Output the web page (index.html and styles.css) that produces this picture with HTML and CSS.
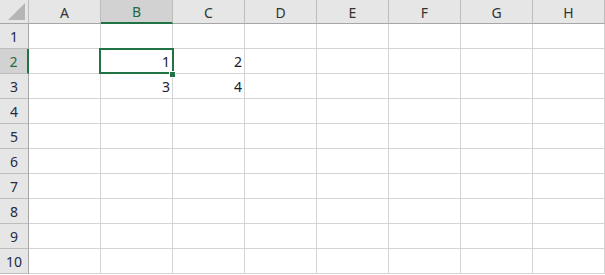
FILE: index.html
```html
<!DOCTYPE html>
<html lang="en">
<head>
    <meta charset="UTF-8">
    <title>Sheet1</title>
    <link rel="stylesheet" href="styles.css">
</head>
<body>
<div class="sheet">
    <div class="corner"><span class="tri"></span></div>
    <div class="colhead">A</div>
    <div class="colhead sel">B</div>
    <div class="colhead">C</div>
    <div class="colhead">D</div>
    <div class="colhead">E</div>
    <div class="colhead">F</div>
    <div class="colhead">G</div>
    <div class="colhead">H</div>

    <div class="rowhead">1</div>
    <div class="cell"></div><div class="cell"></div><div class="cell"></div><div class="cell"></div>
    <div class="cell"></div><div class="cell"></div><div class="cell"></div><div class="cell"></div>

    <div class="rowhead sel">2</div>
    <div class="cell"></div>
    <div class="cell active">1<span class="box"></span><span class="handle"></span></div>
    <div class="cell">2</div><div class="cell"></div>
    <div class="cell"></div><div class="cell"></div><div class="cell"></div><div class="cell"></div>

    <div class="rowhead">3</div>
    <div class="cell"></div><div class="cell">3</div><div class="cell">4</div><div class="cell"></div>
    <div class="cell"></div><div class="cell"></div><div class="cell"></div><div class="cell"></div>

    <div class="rowhead">4</div>
    <div class="cell"></div><div class="cell"></div><div class="cell"></div><div class="cell"></div>
    <div class="cell"></div><div class="cell"></div><div class="cell"></div><div class="cell"></div>

    <div class="rowhead">5</div>
    <div class="cell"></div><div class="cell"></div><div class="cell"></div><div class="cell"></div>
    <div class="cell"></div><div class="cell"></div><div class="cell"></div><div class="cell"></div>

    <div class="rowhead">6</div>
    <div class="cell"></div><div class="cell"></div><div class="cell"></div><div class="cell"></div>
    <div class="cell"></div><div class="cell"></div><div class="cell"></div><div class="cell"></div>

    <div class="rowhead">7</div>
    <div class="cell"></div><div class="cell"></div><div class="cell"></div><div class="cell"></div>
    <div class="cell"></div><div class="cell"></div><div class="cell"></div><div class="cell"></div>

    <div class="rowhead">8</div>
    <div class="cell"></div><div class="cell"></div><div class="cell"></div><div class="cell"></div>
    <div class="cell"></div><div class="cell"></div><div class="cell"></div><div class="cell"></div>

    <div class="rowhead">9</div>
    <div class="cell"></div><div class="cell"></div><div class="cell"></div><div class="cell"></div>
    <div class="cell"></div><div class="cell"></div><div class="cell"></div><div class="cell"></div>

    <div class="rowhead">10</div>
    <div class="cell"></div><div class="cell"></div><div class="cell"></div><div class="cell"></div>
    <div class="cell"></div><div class="cell"></div><div class="cell"></div><div class="cell"></div>
</div>
</body>
</html>
```

FILE: styles.css
```css
*{
    margin: 0;
    padding: 0;
    box-sizing: border-box;
}
body{
    background: #ffffff;
    font-family: "Noto Sans", "Liberation Sans", sans-serif;
    font-size: 14px;
    color: #111111;
}
.sheet{
    display: grid;
    grid-template-columns: 29px repeat(8, 72px);
    grid-template-rows: 24px repeat(10, 25px);
}
.corner{
    background: #e6e6e6;
    border-right: 1px solid #bdbdbd;
    border-bottom: 1px solid #a6a6a6;
    display: flex;
    align-items: flex-end;
    justify-content: flex-end;
    padding: 0 3px 3px 0;
}
.tri{
    width: 17px;
    height: 17px;
    background: #b5b5b5;
    clip-path: polygon(100% 0, 100% 100%, 0 100%);
}
.colhead{
    background: #e6e6e6;
    border-right: 1px solid #bdbdbd;
    border-bottom: 1px solid #a6a6a6;
    color: #333333;
    display: flex;
    align-items: center;
    justify-content: center;
    padding-top: 1px;
}
.colhead.sel{
    background: #d2d2d2;
    border-bottom: 2px solid #217346;
    color: #1e6b42;
}
.rowhead{
    background: #e6e6e6;
    border-right: 1px solid #a6a6a6;
    border-bottom: 1px solid #bdbdbd;
    color: #222a4a;
    display: flex;
    align-items: center;
    justify-content: center;
}
.rowhead.sel{
    background: #d2d2d2;
    border-right: 2px solid #217346;
    color: #1e6b42;
}
.cell{
    border-right: 1px solid #d4d4d4;
    border-bottom: 1px solid #d4d4d4;
    display: flex;
    align-items: center;
    justify-content: flex-end;
    padding-right: 2px;
    color: #1a1a2e;
}
.active{
    position: relative;
}
.box{
    position: absolute;
    left: -2px;
    top: -1px;
    width: 75px;
    height: 26px;
    border: 2px solid #217346;
}
.handle{
    position: absolute;
    left: 68px;
    top: 22px;
    width: 7px;
    height: 7px;
    background: #217346;
    border: 1px solid #ffffff;
}
```
